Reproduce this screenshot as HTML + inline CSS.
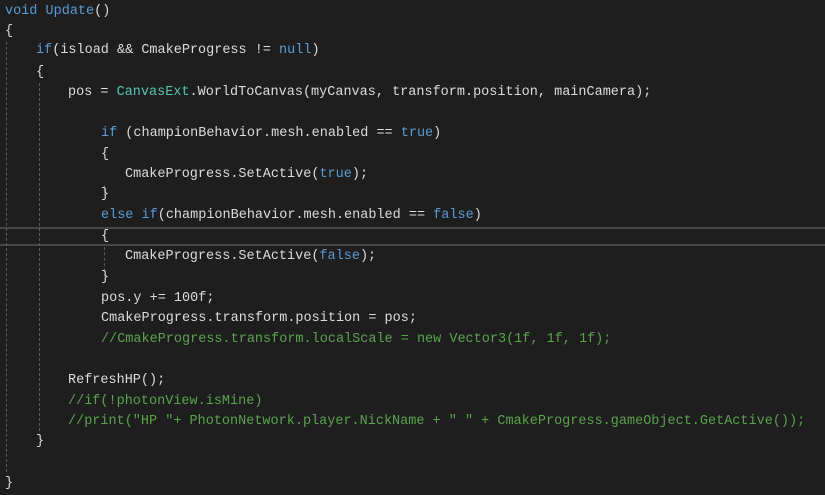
<!DOCTYPE html>
<html><head><meta charset="utf-8"><style>
html,body{margin:0;padding:0;background:#1e1e1e;width:825px;height:494px;overflow:hidden}
.l{position:absolute;height:20.6px;line-height:20.6px;white-space:pre;font-family:"Liberation Mono",monospace;font-size:13.5px;color:#dcdcdc;margin-top:1px}
.k{color:#569cd6}.t{color:#4ec9b0}.g{color:#57a64a}
.v{position:absolute;width:0;border-left:1px dashed #5a5a5a}
.h{position:absolute;left:0;width:825px;height:0;border-top:2px solid #464646}
</style></head><body>
<div class="h" style="top:227px"></div>
<div class="h" style="top:244px"></div>
<div class="v" style="left:6px;top:42px;height:430px"></div>
<div class="v" style="left:39px;top:83px;height:348px"></div>
<div class="v" style="left:104px;top:185px;height:10px"></div>
<div class="v" style="left:104px;top:247px;height:30px"></div>
<div class="l" style="left:5px;top:1px"><span class="k">void</span> <span class="k">Update</span>()</div>
<div class="l" style="left:5px;top:21px">{</div>
<div class="l" style="left:36px;top:40px"><span class="k">if</span>(isload &amp;&amp; CmakeProgress != <span class="k">null</span>)</div>
<div class="l" style="left:36px;top:62px">{</div>
<div class="l" style="left:68px;top:82px">pos = <span class="t">CanvasExt</span>.WorldToCanvas(myCanvas, transform.position, mainCamera);</div>
<div class="l" style="left:101px;top:123px"><span class="k">if</span> (championBehavior.mesh.enabled == <span class="k">true</span>)</div>
<div class="l" style="left:101px;top:144px">{</div>
<div class="l" style="left:125px;top:164px">CmakeProgress.SetActive(<span class="k">true</span>);</div>
<div class="l" style="left:101px;top:184px">}</div>
<div class="l" style="left:101px;top:205px"><span class="k">else</span> <span class="k">if</span>(championBehavior.mesh.enabled == <span class="k">false</span>)</div>
<div class="l" style="left:101px;top:226px">{</div>
<div class="l" style="left:125px;top:246px">CmakeProgress.SetActive(<span class="k">false</span>);</div>
<div class="l" style="left:101px;top:267px">}</div>
<div class="l" style="left:101px;top:288px">pos.y += 100f;</div>
<div class="l" style="left:101px;top:308px">CmakeProgress.transform.position = pos;</div>
<div class="l g" style="left:101px;top:329px">//CmakeProgress.transform.localScale = new Vector3(1f, 1f, 1f);</div>
<div class="l" style="left:68px;top:370px">RefreshHP();</div>
<div class="l g" style="left:68px;top:391px">//if(!photonView.isMine)</div>
<div class="l g" style="left:68px;top:411px">//print("HP "+ PhotonNetwork.player.NickName + " " + CmakeProgress.gameObject.GetActive());</div>
<div class="l" style="left:36px;top:431px">}</div>
<div class="l" style="left:5px;top:473px">}</div>
</body></html>
